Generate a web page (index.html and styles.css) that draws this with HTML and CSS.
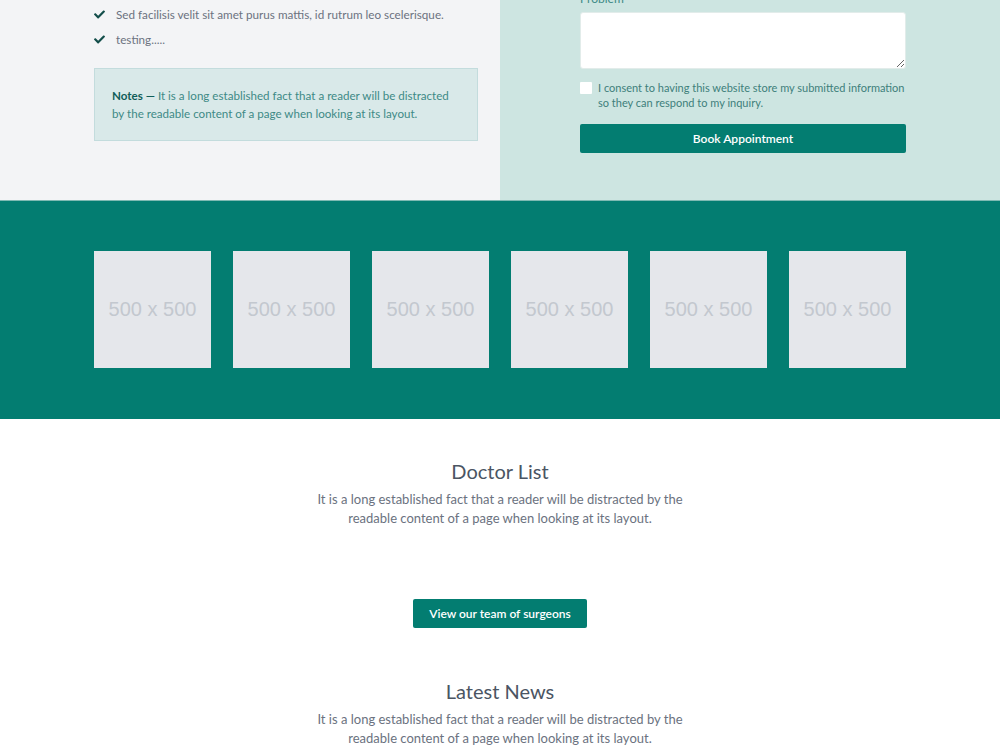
FILE: index.html
```html
<!DOCTYPE html>
<html lang="en">
<head>
    <meta charset="UTF-8">
    <meta name="viewport" content="width=device-width, initial-scale=1.0">
    <title>Clinic - Appointments</title>
    <link rel="stylesheet" href="styles.css">
</head>
<body>

    <section class="booking">
        <div class="booking-info">
            <ul class="check-list">
                <li>
                    <svg class="check" viewBox="0 0 512 512"><path d="M173.9 439.4l-166.4-166.4c-10-10-10-26.2 0-36.2l36.2-36.2c10-10 26.2-10 36.2 0L192 312.7 432.1 72.6c10-10 26.2-10 36.2 0l36.2 36.2c10 10 10 26.2 0 36.2l-294.4 294.4c-10 10-26.2 10-36.2 0z"/></svg>
                    <span>Sed facilisis velit sit amet purus mattis, id rutrum leo scelerisque.</span>
                </li>
                <li>
                    <svg class="check" viewBox="0 0 512 512"><path d="M173.9 439.4l-166.4-166.4c-10-10-10-26.2 0-36.2l36.2-36.2c10-10 26.2-10 36.2 0L192 312.7 432.1 72.6c10-10 26.2-10 36.2 0l36.2 36.2c10 10 10 26.2 0 36.2l-294.4 294.4c-10 10-26.2 10-36.2 0z"/></svg>
                    <span>testing.....</span>
                </li>
            </ul>

            <p class="notes"><strong>Notes &mdash;</strong> It is a long established fact that a reader will be distracted by the readable content of a page when looking at its layout.</p>
        </div>

        <div class="booking-form">
            <form class="form">
                <label class="form-label" for="problem">Problem</label>
                <textarea class="form-area" id="problem"></textarea>

                <label class="consent">
                    <input type="checkbox" class="consent-box">
                    <span>I consent to having this website store my submitted information so they can respond to my inquiry.</span>
                </label>

                <button type="button" class="btn btn-block">Book Appointment</button>
            </form>
        </div>
    </section>

    <section class="gallery">
        <div class="gallery-grid">
            <div class="thumb">500 x 500</div>
            <div class="thumb">500 x 500</div>
            <div class="thumb">500 x 500</div>
            <div class="thumb">500 x 500</div>
            <div class="thumb">500 x 500</div>
            <div class="thumb">500 x 500</div>
        </div>
    </section>

    <section class="block">
        <h2 class="block-title">Doctor List</h2>
        <p class="block-text">It is a long established fact that a reader will be distracted by the readable content of a page when looking at its layout.</p>
        <div class="doctors"></div>
        <button type="button" class="btn">View our team of surgeons</button>
    </section>

    <section class="block">
        <h2 class="block-title">Latest News</h2>
        <p class="block-text">It is a long established fact that a reader will be distracted by the readable content of a page when looking at its layout.</p>
    </section>

</body>
</html>
```

FILE: styles.css
```css
* {
    margin: 0;
    padding: 0;
    box-sizing: border-box;
}

body {
    font-family: Lato, "Open Sans", sans-serif;
    background: #fff;
    color: #6b7280;
    overflow: hidden;
}

/* booking: info on the left, form on the right */

.booking {
    display: grid;
    grid-template-columns: 500px 500px;
    margin-top: -9px;
}

.booking-info {
    background: #f3f4f6;
    padding: 13px 22px 0 94px;
}

.booking-form {
    background: #cde5e1;
    padding: 0 94px 0 80px;
    height: 209px;
}

.check-list {
    list-style: none;
}

.check-list li {
    display: flex;
    align-items: center;
    font-size: 11.7px;
    line-height: 20px;
    margin-bottom: 5px;
}

.check {
    width: 11px;
    height: 11px;
    fill: #134e4a;
    margin-right: 11px;
    flex-shrink: 0;
}

.notes {
    margin-top: 19px;
    background: #d9e9e9;
    border: 1px solid #c3dcdd;
    padding: 18px 17px;
    font-size: 11.6px;
    line-height: 17.5px;
    color: #3e8a86;
}

.notes strong {
    color: #115e59;
}

.form-label {
    display: block;
    font-size: 12px;
    line-height: 16px;
    color: #3e8a86;
    margin-bottom: 5px;
}

.form-area {
    display: block;
    width: 100%;
    height: 57px;
    border: 1px solid #e2ecea;
    border-radius: 3px;
    background: #fff;
    resize: vertical;
}

.consent {
    display: flex;
    align-items: flex-start;
    margin-top: 11px;
    font-size: 11px;
    line-height: 15px;
    color: #3e7f7b;
}

.consent-box {
    appearance: none;
    width: 12px;
    height: 12px;
    background: #fff;
    border-radius: 1px;
    margin: 2px 6px 0 0;
    flex-shrink: 0;
}

.btn {
    display: inline-block;
    background: #037d71;
    color: #fff;
    border: none;
    border-radius: 2px;
    font-family: inherit;
    font-size: 12px;
    font-weight: 600;
    height: 29px;
    padding: 0 16px;
    cursor: pointer;
}

.btn-block {
    display: block;
    width: 100%;
    margin-top: 14px;
}

/* teal strip with placeholder pictures */

.gallery {
    background: #037d71;
    border-top: 1px solid #7fbab3;
    padding: 50px 94px 51px;
}

.gallery-grid {
    display: grid;
    grid-template-columns: repeat(6, 1fr);
    gap: 22px;
}

.thumb {
    height: 117px;
    background: #e5e7eb;
    display: flex;
    align-items: center;
    justify-content: center;
    font-family: "Liberation Sans", Arial, sans-serif;
    font-size: 20px;
    color: #c3c8cf;
}

/* centred sections */

.block {
    text-align: center;
    padding-top: 38px;
}

.block + .block {
    padding-top: 49px;
}

.block-title {
    font-size: 20px;
    font-weight: 400;
    line-height: 28px;
    color: #4b5563;
}

.block-text {
    width: 390px;
    margin: 5px auto 0;
    font-size: 13px;
    line-height: 18.5px;
}

.doctors {
    height: 72px;
}
```
